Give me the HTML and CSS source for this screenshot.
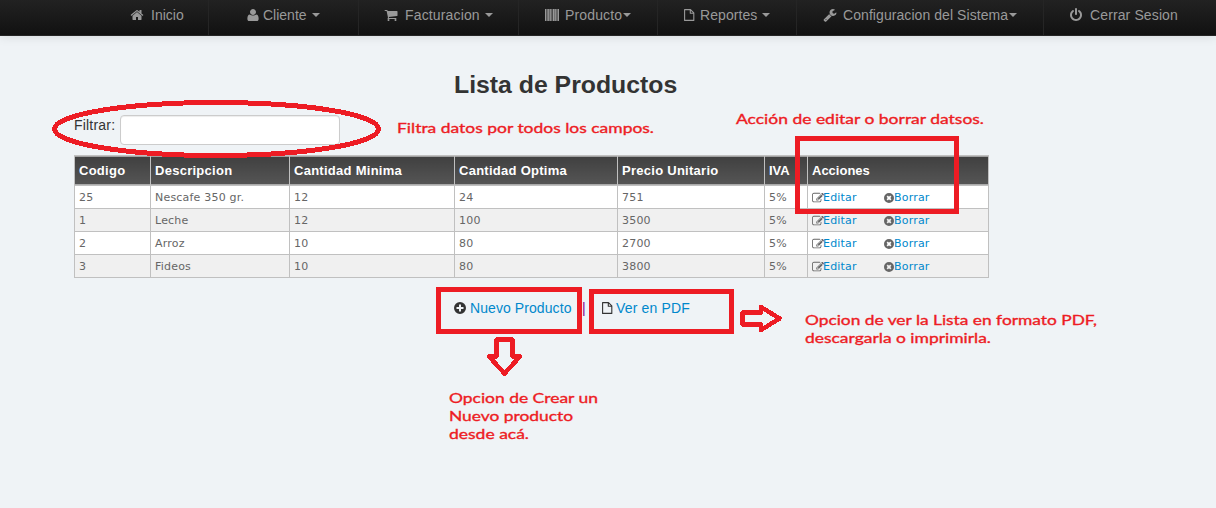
FILE: index.html
```html
<!DOCTYPE html>
<html lang="es">
<head>
<meta charset="utf-8">
<title>Lista de Productos</title>
<link rel="stylesheet" href="styles.css">
</head>
<body>
<svg class="defs" width="0" height="0" aria-hidden="true">
  <symbol id="home" viewBox="0 0 1792 1792"><path d="M1472 992v480q0 26-19 45t-45 19h-384v-384h-256v384h-384q-26 0-45-19t-19-45v-480q0-1 .5-3t.5-3l575-474 575 474q1 2 1 6zm223-69l-62 74q-8 9-21 11h-3q-13 0-21-7l-692-577-692 577q-12 8-24 7-13-2-21-11l-62-74q-8-10-7-23.5t11-21.5l719-599q32-26 76-26t76 26l244 204v-195q0-14 9-23t23-9h192q14 0 23 9t9 23v408l219 182q10 8 11 21.5t-7 23.5z"/></symbol>
  <symbol id="user" viewBox="0 0 1792 1792"><path d="M1616 1399q0 109-62.500 187t-150.500 78h-1014q-88 0-150.500-78t-62.500-187q0-85 8.500-160.500t31.500-152 58.500-131 94-89 134.500-34.500q131 128 393 128t393-128q76 0 134.500 34.500t94 89 58.500 131 31.500 152 8.500 160.500zm-336-887q0 159-112.500 271.500t-271.500 112.500-271.500-112.500-112.500-271.500 112.500-271.500 271.500-112.500 271.500 112.500 112.500 271.500z"/></symbol>
  <symbol id="cart" viewBox="0 0 1792 1792"><path d="M704 1536q0 52-38 90t-90 38-90-38-38-90 38-90 90-38 90 38 38 90zm896 0q0 52-38 90t-90 38-90-38-38-90 38-90 90-38 90 38 38 90zm128-1088v512q0 24-16.500 42.500t-40.500 21.500l-1044 122q13 60 13 70 0 16-24 64h920q26 0 45 19t19 45-19 45-45 19h-1024q-26 0-45-19t-19-45q0-11 8-31.500t16-36 21.500-40 15.500-29.500l-177-823h-204q-26 0-45-19t-19-45 19-45 45-19h256q16 0 28.500 6.500t19.500 15.500 13 24.500 8 26 5.500 29.500 4.500 26h1201q26 0 45 19t19 45z"/></symbol>
  <symbol id="barcode" viewBox="0 0 14 12"><path d="M0 0h1.200v12H0zM1.700 0h1v12h-1zM3.100 0h1.500v12H3.100zM5 0h.9v12H5zM6.400 0h1v12h-1zM8 0h1.700v12H8zM10.100 0h.9v12h-.9zM11.400 0h1v12h-1zM12.800 0H14v12h-1.200z"/></symbol>
  <symbol id="file" viewBox="0 0 11 12"><path d="M.6.6h5.900l3.300 3.300v7.500H.6zM6.300.8v3.400h3.400" fill="none" stroke="currentColor" stroke-width="1.100" stroke-linejoin="round"/></symbol>
  <symbol id="wrench" viewBox="0 0 1792 1792"><path d="M448 1472q0-26-19-45t-45-19-45 19-19 45 19 45 45 19 45-19 19-45zm644-420l-682 682q-37 37-90 37-52 0-91-37l-106-108q-38-36-38-90 0-53 38-91l681-681q39 98 114.500 173.500t173.500 114.500zm634-435q0 39-23 106-47 134-164.500 217.500t-258.500 83.500q-185 0-316.500-131.500t-131.500-316.500 131.500-316.500 316.500-131.500q58 0 121.500 16.500t107.500 46.500q16 11 16 28t-16 28l-293 169v224l193 107q5-3 79-48.500t135.500-81 70.500-35.500q15 0 23.500 10t8.500 25z"/></symbol>
  <symbol id="power" viewBox="0 0 1792 1792"><path d="M1664 896q0 156-61 298t-164 245-245 164-298 61-298-61-245-164-164-245-61-298q0-182 80.500-343t226.500-270q43-32 95.500-25t83.500 50q32 42 24.500 94.500t-49.500 84.500q-98 74-151.500 181t-53.500 228q0 104 40.500 198.500t109.500 163.500 163.500 109.500 198.500 40.500 198.500-40.500 163.500-109.500 109.500-163.500 40.500-198.500q0-121-53.500-228t-151.500-181q-42-32-49.500-84.500t24.500-94.500q31-43 84-50t95 25q146 109 226.500 270t80.500 343zm-640-768v640q0 52-38 90t-90 38-90-38-38-90v-640q0-52 38-90t90-38 90 38 38 90z"/></symbol>
  <symbol id="plus" viewBox="0 0 12 12"><path fill-rule="evenodd" d="M6 0a6 6 0 1 0 0 12A6 6 0 1 0 6 0zM5 2.500h2V5h2.500v2H7v2.500H5V7H2.500V5H5z"/></symbol>
  <symbol id="remove" viewBox="0 0 12 12"><path fill-rule="evenodd" d="M6 0a6 6 0 1 0 0 12A6 6 0 1 0 6 0zM4.600 3.100L6 4.500l1.400-1.400 1.500 1.500L7.500 6l1.400 1.400-1.500 1.500L6 7.500 4.600 8.900 3.100 7.400 4.500 6 3.100 4.600z"/></symbol>
  <symbol id="edit" viewBox="0 0 1792 1792"><path d="M888 1184l116-116-152-152-116 116v56h96v96h56zm440-720q-16-16-33 1l-350 350q-17 17-1 33t33-1l350-350q17-17 1-33zm80 594v190q0 119-84.500 203.500t-203.500 84.500h-832q-119 0-203.500-84.500t-84.500-203.500v-832q0-119 84.500-203.500t203.500-84.500h832q63 0 117 25 15 7 18 23 3 17-9 29l-49 49q-14 14-32 8-23-6-45-6h-832q-66 0-113 47t-47 113v832q0 66 47 113t113 47h832q66 0 113-47t47-113v-126q0-13 9-22l64-64q15-15 35-7t20 29zm-96-738l288 288-672 672h-288v-288zm444 132l-92 92-288-288 92-92q28-28 68-28t68 28l152 152q28 28 28 68t-28 68z"/></symbol>
</svg>

<nav class="navbar">
  <a class="item inicio"><svg class="icon"><use href="#home"/></svg><span>Inicio</span></a>
  <a class="item cliente"><svg class="icon"><use href="#user"/></svg><span>Cliente</span><i class="caret"></i></a>
  <a class="item facturacion"><svg class="icon"><use href="#cart"/></svg><span>Facturacion</span><i class="caret"></i></a>
  <a class="item producto"><svg class="icon bars"><use href="#barcode"/></svg><span>Producto</span><i class="caret tight"></i></a>
  <a class="item reportes"><svg class="icon page-icon"><use href="#file"/></svg><span>Reportes</span><i class="caret"></i></a>
  <a class="item config"><svg class="icon"><use href="#wrench"/></svg><span>Configuracion del Sistema</span><i class="caret tight"></i></a>
  <a class="item salir"><svg class="icon"><use href="#power"/></svg><span>Cerrar Sesion</span></a>
</nav>

<main class="content">
  <h3 class="title">Lista de Productos</h3>
  <div class="filter"><label for="filtro">Filtrar:</label><input id="filtro" type="text"></div>
  <table class="grid">
    <colgroup><col class="c1"><col class="c2"><col class="c3"><col class="c4"><col class="c5"><col class="c6"><col class="c7"></colgroup>
    <thead><tr><th>Codigo</th><th>Descripcion</th><th>Cantidad Minima</th><th>Cantidad Optima</th><th>Precio Unitario</th><th>IVA</th><th>Acciones</th></tr></thead>
    <tbody>
      <tr><td>25</td><td>Nescafe 350 gr.</td><td>12</td><td>24</td><td>751</td><td>5%</td><td><div class="actions"><span class="edit"><svg><use href="#edit"/></svg><a>Editar</a></span><span class="remove"><svg><use href="#remove"/></svg><a>Borrar</a></span></div></td></tr>
      <tr><td>1</td><td>Leche</td><td>12</td><td>100</td><td>3500</td><td>5%</td><td><div class="actions"><span class="edit"><svg><use href="#edit"/></svg><a>Editar</a></span><span class="remove"><svg><use href="#remove"/></svg><a>Borrar</a></span></div></td></tr>
      <tr><td>2</td><td>Arroz</td><td>10</td><td>80</td><td>2700</td><td>5%</td><td><div class="actions"><span class="edit"><svg><use href="#edit"/></svg><a>Editar</a></span><span class="remove"><svg><use href="#remove"/></svg><a>Borrar</a></span></div></td></tr>
      <tr><td>3</td><td>Fideos</td><td>10</td><td>80</td><td>3800</td><td>5%</td><td><div class="actions"><span class="edit"><svg><use href="#edit"/></svg><a>Editar</a></span><span class="remove"><svg><use href="#remove"/></svg><a>Borrar</a></span></div></td></tr>
    </tbody>
  </table>
  <div class="links">
    <svg class="plus"><use href="#plus"/></svg><a class="new">Nuevo Producto</a><span class="bar">|</span><svg class="doc"><use href="#file"/></svg><a class="pdf">Ver en PDF</a>
  </div>
</main>

<svg class="notes" width="1216" height="508" viewBox="0 0 1216 508">
  <g class="marks" shape-rendering="crispEdges">
    <ellipse cx="216.500" cy="129" rx="162" ry="26.500"/>
    <rect x="797.500" y="138.500" width="159" height="73"/>
    <rect x="438.500" y="289.500" width="141" height="42"/>
    <rect x="591.500" y="291.500" width="140" height="40"/>
    <path class="arrow" d="M742.500 312.500h18.500v-5.500l18.500 11.500-18.500 11.500v-5.500h-18.500z"/>
    <path class="arrow" d="M496.500 339.500h16v17h7.500l-15.500 17-15.500-17h7.500z"/>
  </g>
  <g class="captions">
    <text x="397" y="133" textLength="257" lengthAdjust="spacingAndGlyphs">Filtra datos por todos los campos.</text>
    <text x="736" y="124" textLength="248" lengthAdjust="spacingAndGlyphs">Acción de editar o borrar datsos.</text>
    <text x="805" y="325" textLength="292" lengthAdjust="spacingAndGlyphs">Opcion de ver la Lista en formato PDF,</text>
    <text x="805" y="343" textLength="186" lengthAdjust="spacingAndGlyphs">descargarla o imprimirla.</text>
    <text x="449" y="403" textLength="149" lengthAdjust="spacingAndGlyphs">Opcion de Crear un</text>
    <text x="449" y="421" textLength="124" lengthAdjust="spacingAndGlyphs">Nuevo producto</text>
    <text x="449" y="439" textLength="80" lengthAdjust="spacingAndGlyphs">desde acá.</text>
  </g>
</svg>
</body>
</html>
```
FILE: styles.css
```css
* { box-sizing: border-box; }
body {
  margin: 0;
  height: 508px;
  overflow: hidden;
  background: #eff3f6;
  color: #333;
  font: 14px/20px "Liberation Sans", Arial, sans-serif;
}
.defs { position: absolute; }
svg { fill: currentColor; flex: none; }

.navbar {
  display: flex;
  height: 36px;
  background: linear-gradient(#222, #111);
  border-bottom: 1px solid #252525;
  box-shadow: 0 1px 10px rgba(0, 0, 0, .1);
  color: #999;
}
.item {
  display: flex;
  align-items: flex-start;
  flex: none;
  padding-top: 5px;
  border-right: 1px solid #252525;
  white-space: nowrap;
}
.icon { width: 14px; height: 14px; margin-top: 3px; }
.bars { height: 12px; margin-top: 4px; }
.page-icon { width: 11px; height: 12px; margin-top: 4px; }
.caret {
  margin: 8px 0 0 5px;
  border: 4px solid transparent;
  border-top-color: #999;
  border-bottom: 0;
}
.caret.tight { margin-left: 1px; }
.inicio { width: 209px; padding-left: 130px; }
.inicio span { margin-left: 7px; }
.cliente { width: 150px; padding-left: 37px; }
.cliente span { margin-left: 3px; }
.facturacion { width: 160px; padding-left: 25px; }
.facturacion span { margin-left: 7px; letter-spacing: .15px; }
.producto { width: 139px; padding-left: 26px; }
.producto span { margin-left: 6px; letter-spacing: .15px; }
.reportes { width: 139px; padding-left: 26px; }
.reportes span { margin-left: 5px; letter-spacing: .08px; }
.config { width: 247px; padding-left: 26px; }
.config span { margin-left: 6px; letter-spacing: .07px; }
.salir { flex: 1; padding-left: 25px; border: 0; }
.salir span { margin-left: 7px; letter-spacing: .12px; }

.content { margin-left: 74px; width: 915px; }
.title {
  margin: 0;
  padding: 29px 0 0 380px;
  font-size: 24.8px;
  line-height: 40px;
  white-space: nowrap;
}
.filter { display: flex; align-items: flex-start; height: 50px; padding-top: 10px; }
.filter label { width: 46px; letter-spacing: .2px; }
.filter input {
  width: 220px;
  height: 30px;
  background: #fff;
  border: 1px solid #ccc;
  border-radius: 4px;
  box-shadow: inset 0 1px 1px rgba(0, 0, 0, .075);
}
.grid {
  width: 915px;
  table-layout: fixed;
  border-collapse: collapse;
  font: 11px/14px "DejaVu Sans", Verdana, sans-serif;
  color: #666;
}
.c1 { width: 76px; } .c2 { width: 139px; } .c3 { width: 165px; } .c4 { width: 163px; }
.c5 { width: 147px; } .c6 { width: 43px; } .c7 { width: 181px; }
.grid th, .grid td { border: 1px solid #c0c0c0; padding: 0 4px; text-align: left; white-space: nowrap; }
.grid th {
  height: 30px;
  color: #fff;
  font: bold 13px/18px "Liberation Sans", Arial, sans-serif;
  letter-spacing: .27px;
  background: linear-gradient(#404040, #555 28px, #fff 28px);
}
.grid th:nth-child(n+6) { letter-spacing: 0; }
.grid td { height: 23px; padding-top: 2px; background: #fff; letter-spacing: .2px; }
.grid tbody tr:nth-child(even) td { background: #f0f0f0; }
.grid a, .links a { color: #08c; }
.actions { display: flex; }
.actions span { display: flex; align-items: center; }
.edit { width: 72px; }
.edit svg { width: 12px; height: 12px; margin-right: -1px; }
.remove svg { width: 10px; height: 10px; margin-top: -1px; }
.links { display: flex; align-items: flex-start; padding: 20px 0 0 380px; white-space: nowrap; }
.plus { width: 12px; height: 12px; margin-top: 4px; }
.new { width: 112px; margin-left: 4px; letter-spacing: .08px; }
.bar { width: 20px; color: #808; }
.doc { width: 11px; height: 12px; margin-top: 4px; }
.pdf { margin-left: 3px; letter-spacing: .15px; }

.notes { position: absolute; left: 0; top: 0; pointer-events: none; }
.marks { fill: none; stroke: #ed1c24; stroke-width: 5px; }
.marks .arrow { stroke-width: 4.500px; stroke-linejoin: round; }
.captions {
  fill: #ed1c24;
  stroke: #ed1c24;
  stroke-width: .35px;
  font: 14px Lato, sans-serif;
}
```
